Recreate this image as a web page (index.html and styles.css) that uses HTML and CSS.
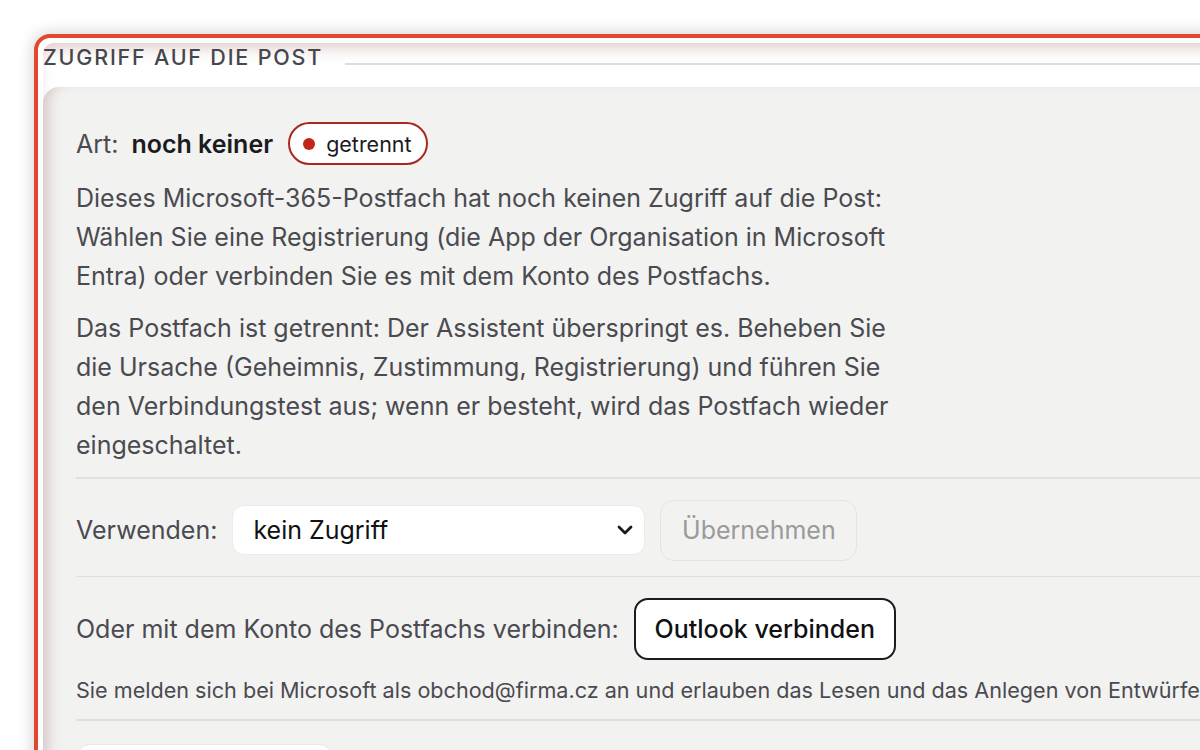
FILE: index.html
```html
<!DOCTYPE html>
<html lang="de">
<head>
<meta charset="utf-8">
<title>Zugriff auf die Post</title>
<link rel="stylesheet" href="styles.css">
</head>
<body>
<div class="page">
  <div class="frame">
    <div class="inner">
      <div class="legend-row">
        <span class="legend">ZUGRIFF AUF DIE POST</span>
        <span class="legend-line"></span>
      </div>
      <div class="panel">
        <div class="art-row">
          <span class="label">Art:</span>
          <span class="value">noch keiner</span>
          <span class="badge"><span class="dot"></span>getrennt</span>
        </div>
        <p class="text">Dieses Microsoft-365-Postfach hat noch keinen Zugriff auf die Post: Wählen Sie eine Registrierung (die App der Organisation in Microsoft Entra) oder verbinden Sie es mit dem Konto des Postfachs.</p>
        <p class="text second">Das Postfach ist getrennt: Der Assistent überspringt es. Beheben Sie die Ursache (Geheimnis, Zustimmung, Registrierung) und führen Sie den Verbindungstest aus; wenn er besteht, wird das Postfach wieder eingeschaltet.</p>
        <div class="divider first"></div>
        <div class="use-row">
          <span class="label">Verwenden:</span>
          <div class="select-wrap">
            <select class="select">
              <option>kein Zugriff</option>
            </select>
            <svg class="chevron" width="16" height="10" viewBox="0 0 16 10"><path d="M2 2 L8 8 L14 2" fill="none" stroke="#1a1a1a" stroke-width="2.8" stroke-linecap="round" stroke-linejoin="round"/></svg>
          </div>
          <button class="btn btn-disabled" disabled>Übernehmen</button>
        </div>
        <div class="divider"></div>
        <div class="connect-row">
          <span class="label">Oder mit dem Konto des Postfachs verbinden:</span>
          <button class="btn btn-outline">Outlook verbinden</button>
        </div>
        <p class="hint">Sie melden sich bei Microsoft als obchod@firma.cz an und erlauben das Lesen und das Anlegen von Entwürfen.</p>
        <div class="divider after-hint"></div>
        <div class="next-box"></div>
      </div>
    </div>
  </div>
</div>
</body>
</html>
```
FILE: styles.css
```css
html, body {
  margin: 0;
  padding: 0;
  background: #ffffff;
  overflow: hidden;
  width: 1200px;
  height: 750px;
}

body {
  font-family: Inter, "Noto Sans", "Liberation Sans", sans-serif;
  color: #4a4a50;
}

.page {
  padding: 34px 0 0 34px;
}

.frame {
  width: 1400px;
  height: 900px;
  border: 4px solid #e1482d;
  border-radius: 16px;
  box-shadow: 0 0 14px 3px rgba(0, 0, 0, 0.14);
  background: #ffffff;
  padding: 5px 0 0 5px;
  box-sizing: border-box;
}

.inner {
  height: 100%;
  background: #ffffff;
  border-radius: 11px 0 0 0;
  box-shadow: inset 0 10px 16px -6px rgba(175, 130, 125, 0.45);
  display: flex;
  flex-direction: column;
}

.legend-row {
  height: 44px;
  display: flex;
  align-items: flex-start;
  padding-top: 2px;
  box-sizing: border-box;
}

.legend {
  font-size: 21.5px;
  line-height: 24px;
  letter-spacing: 1.8px;
  color: #46464c;
  padding-right: 22px;
  font-weight: 500;
}

.legend-line {
  flex: 1;
  height: 1.5px;
  background: #dddddd;
  margin-top: 18px;
}

.panel {
  flex: 1;
  background: #f2f2f0;
  border-radius: 16px 0 0 0;
  box-shadow: inset 12px 0 14px -8px rgba(165, 125, 120, 0.4);
  padding: 35px 0 0 33px;
  font-size: 25px;
}

.art-row {
  display: flex;
  align-items: center;
  height: 43px;
}

.label {
  color: #4a4a50;
}

.value {
  margin-left: 13px;
  font-weight: 600;
  color: #1b1b1f;
}

.badge {
  margin-left: 15px;
  display: inline-flex;
  align-items: center;
  height: 43px;
  box-sizing: border-box;
  padding: 0 14px 0 13px;
  border: 2px solid #a9281f;
  border-radius: 22px;
  background: #ffffff;
  color: #1b1b1f;
  font-size: 21.5px;
}

.dot {
  width: 12px;
  height: 12px;
  border-radius: 50%;
  background: #c0271c;
  margin-right: 11px;
}

.text {
  margin: 14px 0 0 0;
  max-width: 830px;
  line-height: 39px;
  color: #4a4a50;
}

.text.second {
  margin-top: 13px;
}

.divider {
  height: 1.5px;
  background: #e0e0de;
}

.divider.first {
  margin-top: 12px;
}

.divider.after-hint {
  margin-top: 14px;
}

.use-row {
  display: flex;
  align-items: center;
  padding: 21px 0 15px 0;
}

.select-wrap {
  position: relative;
  margin-left: 15px;
}

.select {
  appearance: none;
  -webkit-appearance: none;
  width: 413px;
  height: 50px;
  border: 1px solid #ebebe9;
  border-radius: 12px;
  background: #ffffff;
  font-family: Inter, "Noto Sans", "Liberation Sans", sans-serif;
  font-size: 25px;
  color: #111114;
  padding: 0 40px 0 20px;
  display: block;
}

.chevron {
  position: absolute;
  right: 12px;
  top: 20px;
  pointer-events: none;
}

.btn {
  font-family: Inter, "Noto Sans", "Liberation Sans", sans-serif;
  font-size: 25px;
  border-radius: 14px;
  padding: 0;
  box-sizing: border-box;
}

.btn-disabled {
  margin-left: 15px;
  height: 61px;
  width: 197px;
  background: transparent;
  border: 1.5px solid #e3e3e1;
  color: #9a9a9c;
}

.btn-outline {
  margin-left: 15px;
  height: 62px;
  width: 262px;
  background: #ffffff;
  border: 2px solid #1c1c1f;
  color: #111114;
  font-weight: 500;
}

.connect-row {
  display: flex;
  align-items: center;
  padding-top: 21px;
}

.hint {
  margin: 15px 0 0 0;
  font-size: 21.6px;
  line-height: 30px;
  white-space: nowrap;
  color: #4a4a50;
}

.next-box {
  margin-top: 23px;
  width: 257px;
  height: 60px;
  background: #ffffff;
  border: 1px solid #e6e6e4;
  border-radius: 14px;
  box-sizing: border-box;
}
```
